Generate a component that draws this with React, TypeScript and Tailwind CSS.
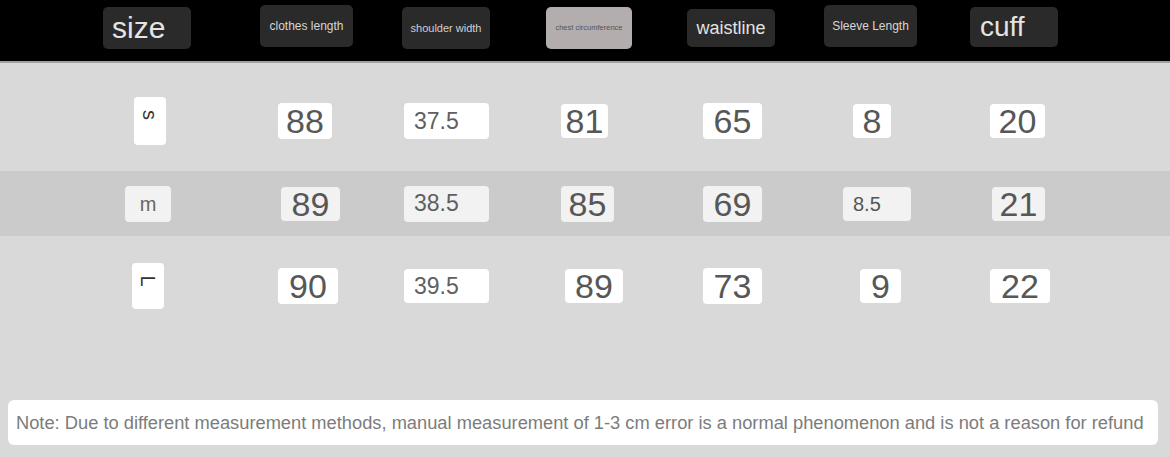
import type { ReactNode } from 'react'

type Cell = {
  text: string
  box: string
  txt: string
}

// columns start at x = 100, 250, 400, 540, 680, 820, 960
const COLS = 'grid grid-cols-[150px_150px_140px_140px_140px_140px_1fr] pl-[100px]'

const headers: { label: string; box: string; txt: string }[] = [
  { label: 'size', box: 'ml-[3px] mt-[7px] w-[88px] h-[42px] bg-[#2a2a2a] justify-start pl-[9px]', txt: 'text-[30px] text-[#e4e4e4]' },
  { label: 'clothes length', box: 'ml-[10px] mt-[5px] w-[93px] h-[42px] bg-[#2a2a2a] justify-center', txt: 'text-[12px] text-[#d6d6d6]' },
  { label: 'shoulder width', box: 'ml-[2px] mt-[7px] w-[88px] h-[42px] bg-[#2a2a2a] justify-center', txt: 'text-[11px] text-[#d0d0d0]' },
  { label: 'chest circumference', box: 'ml-[6px] mt-[7px] w-[86px] h-[42px] bg-[#b3adad] justify-center rounded-[3px]', txt: 'text-[7.5px] text-[#555]' },
  { label: 'waistline', box: 'ml-[7px] mt-[9px] w-[88px] h-[38px] bg-[#2a2a2a] justify-center', txt: 'text-[18px] text-[#e2e2e2]' },
  { label: 'Sleeve Length', box: 'ml-[4px] mt-[5px] w-[93px] h-[42px] bg-[#2a2a2a] justify-center', txt: 'text-[12px] text-[#d6d6d6]' },
  { label: 'cuff', box: 'ml-[10px] mt-[7px] w-[88px] h-[40px] bg-[#2a2a2a] justify-start pl-[10px]', txt: 'text-[28px] text-[#e4e4e4]' },
]

const big = 'text-[34px] text-[#575757] justify-center'
const mid = 'text-[23px] text-[#606060] justify-start pl-[10px]'

const rowS: Cell[] = [
  { text: 's', box: 'ml-[34px] w-[32px] h-[48px]', txt: 'size' },
  { text: '88', box: 'ml-[28px] w-[54px] h-[36px]', txt: big },
  { text: '37.5', box: 'ml-[4px] w-[85px] h-[36px]', txt: mid },
  { text: '81', box: 'ml-[21px] w-[47px] h-[34px]', txt: big },
  { text: '65', box: 'ml-[23px] w-[59px] h-[36px]', txt: big },
  { text: '8', box: 'ml-[33px] w-[38px] h-[34px]', txt: big },
  { text: '20', box: 'ml-[30px] w-[55px] h-[34px]', txt: big },
]

const rowM: Cell[] = [
  { text: 'm', box: 'ml-[25px] w-[46px] h-[36px]', txt: 'text-[20px] text-[#666] justify-center' },
  { text: '89', box: 'ml-[31px] w-[59px] h-[34px]', txt: big },
  { text: '38.5', box: 'ml-[4px] w-[85px] h-[36px]', txt: mid },
  { text: '85', box: 'ml-[21px] w-[53px] h-[36px]', txt: big },
  { text: '69', box: 'ml-[23px] w-[59px] h-[36px]', txt: big },
  { text: '8.5', box: 'ml-[23px] w-[68px] h-[34px]', txt: 'text-[20px] text-[#555] justify-start pl-[10px]' },
  { text: '21', box: 'ml-[32px] w-[53px] h-[34px]', txt: big },
]

const rowL: Cell[] = [
  { text: 'L', box: 'ml-[32px] w-[32px] h-[46px]', txt: 'size' },
  { text: '90', box: 'ml-[28px] w-[60px] h-[36px]', txt: big },
  { text: '39.5', box: 'ml-[4px] w-[85px] h-[34px]', txt: mid },
  { text: '89', box: 'ml-[25px] w-[58px] h-[34px]', txt: big },
  { text: '73', box: 'ml-[23px] w-[59px] h-[36px]', txt: big },
  { text: '9', box: 'ml-[40px] w-[41px] h-[34px]', txt: big },
  { text: '22', box: 'ml-[30px] w-[60px] h-[34px]', txt: big },
]

function Box({ cell, bg }: { cell: Cell; bg: string }) {
  // rotated size letters sit near the top of a tall card
  if (cell.txt === 'size') {
    return (
      <div className={`${cell.box} ${bg} rounded-[4px] flex justify-center pt-[8px]`}>
        <span className="rotate-90 text-[20px] leading-none text-[#333] h-[20px]">{cell.text}</span>
      </div>
    )
  }
  return (
    <div className={`${cell.box} ${bg} ${cell.txt} rounded-[4px] flex items-center leading-none`}>
      {cell.text}
    </div>
  )
}

function Row({ cells, bg, rowClass }: { cells: Cell[]; bg: string; rowClass: string }): ReactNode {
  return (
    <div className={`${COLS} items-center ${rowClass}`}>
      {cells.map((c, i) => (
        <div key={i} className="flex">
          <Box cell={c} bg={bg} />
        </div>
      ))}
    </div>
  )
}

export default function App() {
  return (
    <div
      className="w-[1170px] h-[457px] bg-[#d9d9d9] flex flex-col overflow-hidden"
      style={{ fontFamily: '"Liberation Sans", Arial, sans-serif' }}
    >
      {/* header */}
      <div className={`${COLS} h-[61px] bg-black items-start`}>
        {headers.map(h => (
          <div key={h.label} className="flex">
            <div className={`${h.box} rounded-[5px] flex items-center whitespace-nowrap`}>
              <span className={`${h.txt} leading-none`}>{h.label}</span>
            </div>
          </div>
        ))}
      </div>
      <div className="h-[2px] bg-[#a0a0a0]" />

      {/* rows */}
      <Row cells={rowS} bg="bg-white" rowClass="h-[108px] pt-[8px]" />
      <Row cells={rowM} bg="bg-[#f2f2f2]" rowClass="h-[65px] bg-[#cbcbcb]" />
      <Row cells={rowL} bg="bg-white" rowClass="h-[100px]" />

      {/* note */}
      <div className="mt-[64px] mx-[8px] mr-[12px] h-[45px] bg-white rounded-[6px] flex items-center pl-[8px]">
        <span className="text-[18.3px] text-[#7c7c7c] whitespace-nowrap">
          Note: Due to different measurement methods, manual measurement of 1-3 cm error is a normal phenomenon and is not a reason for refund
        </span>
      </div>
    </div>
  )
}
